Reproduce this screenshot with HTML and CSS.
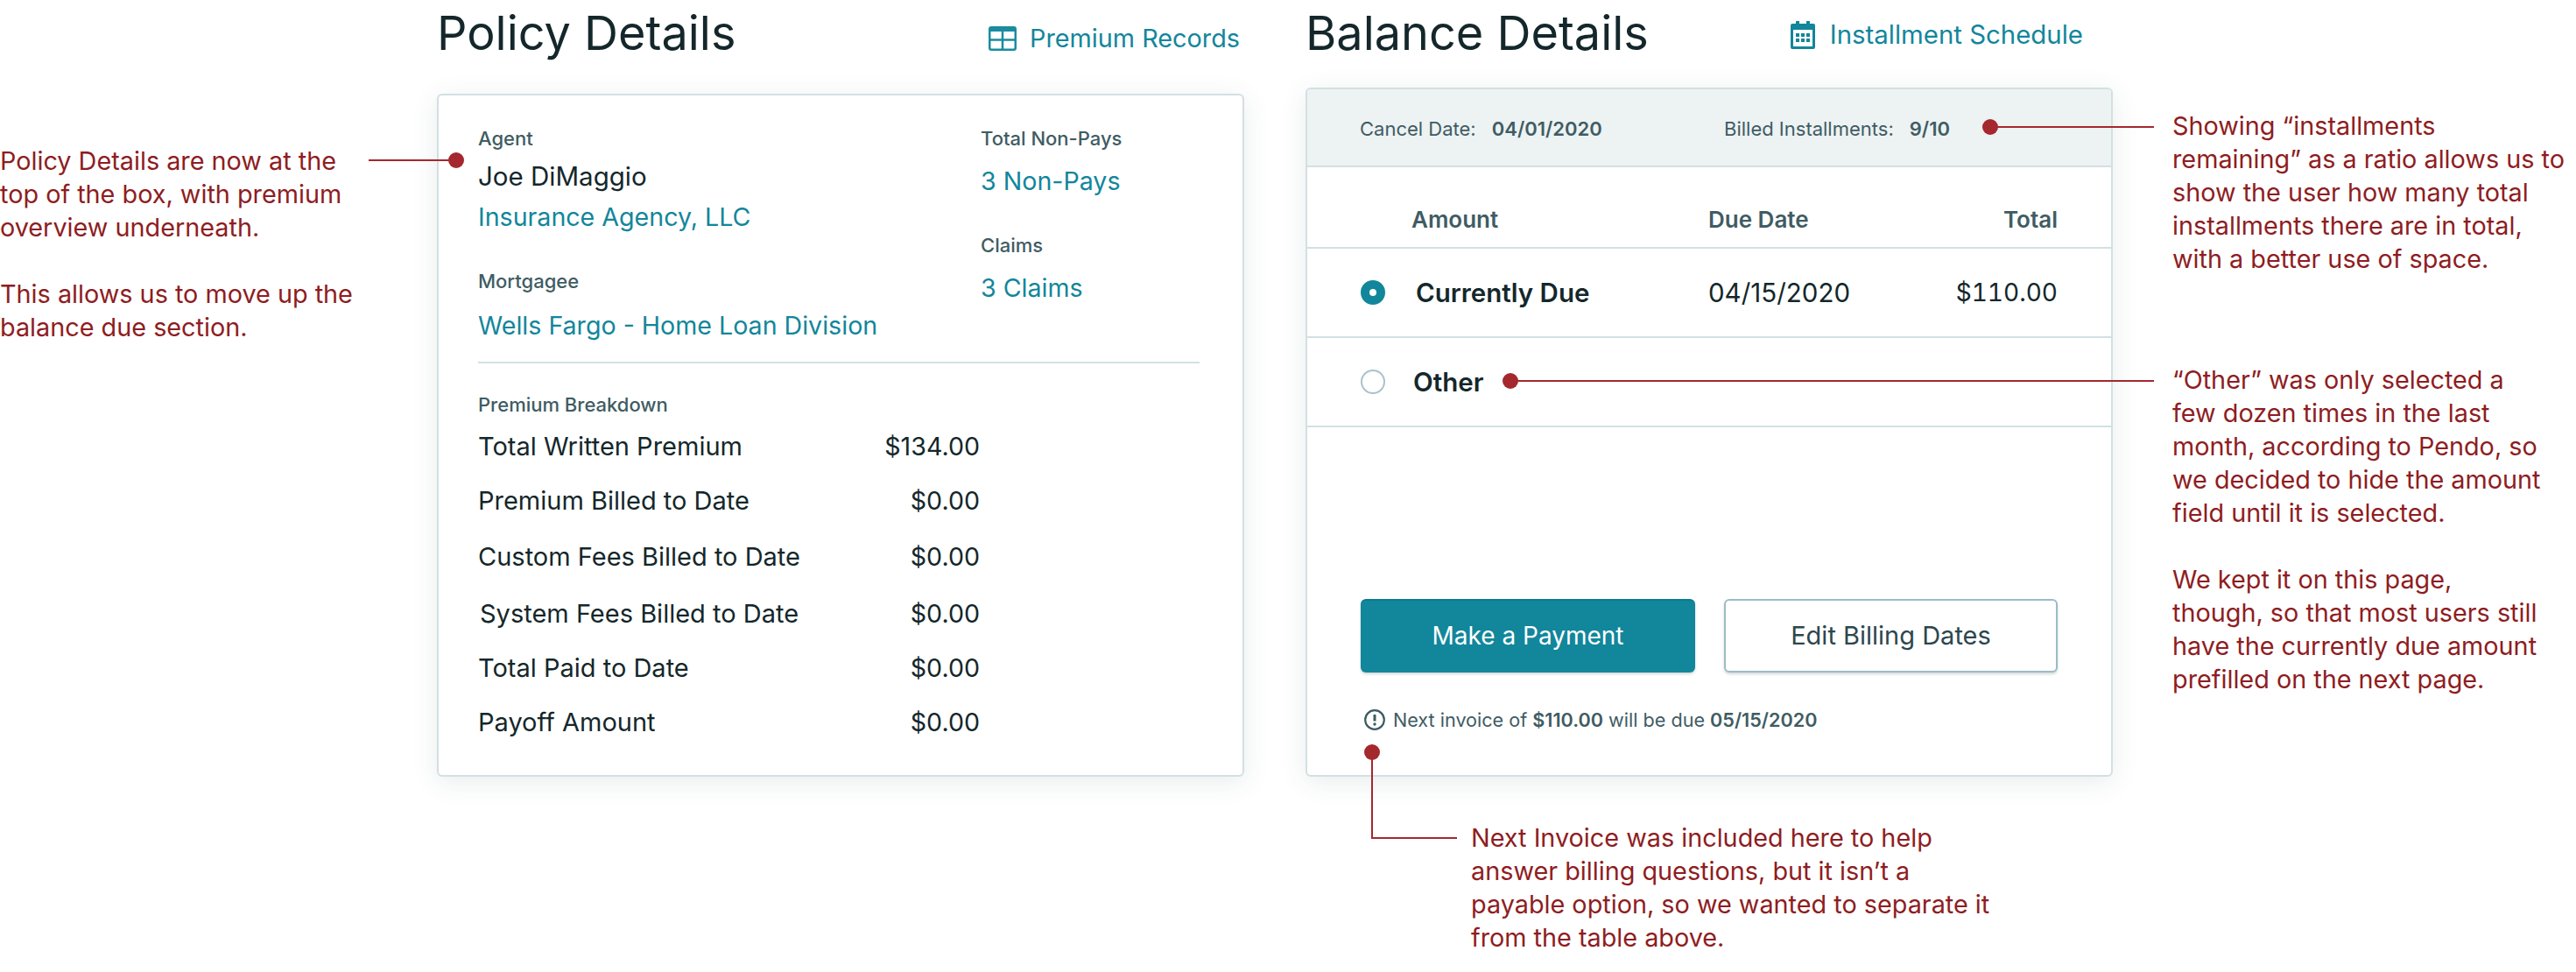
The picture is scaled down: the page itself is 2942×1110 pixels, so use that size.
FILE: index.html
```html
<!DOCTYPE html>
<html lang="en">
<head>
    <meta charset="UTF-8">
    <title>Policy and Balance Details</title>
    <link rel="stylesheet" href="styles.css">
</head>
<body>
    <main class="page">
        <section class="column policy">
            <div class="column-head">
                <h1>Policy Details</h1>
                <a class="head-link" href="#">
                    <svg class="icon-table" viewBox="0 0 32 28"><rect x="1.25" y="1.25" width="29.5" height="25.5" rx="2" fill="#fff" stroke="#1b8ba0" stroke-width="2.5"/><path d="M1 3.5h30" stroke="#1b8ba0" stroke-width="5"/><path d="M1 15.5h30M16 5v22" stroke="#1b8ba0" stroke-width="2.5"/></svg>
                    Premium Records
                </a>
            </div>
            <div class="card policy-card">
                <div class="policy-top">
                    <div class="policy-main">
                        <div class="label">Agent</div>
                        <div class="value agent-name">Joe DiMaggio</div>
                        <a class="value link agent-link" href="#">Insurance Agency, LLC</a>
                        <div class="label mortgagee-label">Mortgagee</div>
                        <a class="value link mortgagee-link" href="#">Wells Fargo - Home Loan Division</a>
                    </div>
                    <div class="policy-side">
                        <div class="label">Total Non-Pays</div>
                        <a class="value link side-link" href="#">3 Non-Pays</a>
                        <div class="label claims-label">Claims</div>
                        <a class="value link side-link" href="#">3 Claims</a>
                    </div>
                </div>
                <hr class="divider">
                <div class="label">Premium Breakdown</div>
                <div class="breakdown">
                    <div class="breakdown-row"><span>Total Written Premium</span><span class="amount">$134.00</span></div>
                    <div class="breakdown-row"><span>Premium Billed to Date</span><span class="amount">$0.00</span></div>
                    <div class="breakdown-row tall"><span>Custom Fees Billed to Date</span><span class="amount">$0.00</span></div>
                    <div class="breakdown-row"><span class="nudged">System Fees Billed to Date</span><span class="amount">$0.00</span></div>
                    <div class="breakdown-row"><span>Total Paid to Date</span><span class="amount">$0.00</span></div>
                    <div class="breakdown-row"><span>Payoff Amount</span><span class="amount">$0.00</span></div>
                </div>
            </div>
        </section>

        <section class="column balance">
            <div class="column-head">
                <h1>Balance Details</h1>
                <a class="head-link" href="#">
                    <svg class="icon-calendar" viewBox="0 0 28 32"><path fill="#12869b" d="M6 0h4v3h8V0h4v3h4a2 2 0 0 1 2 2v25a2 2 0 0 1-2 2H2a2 2 0 0 1-2-2V5a2 2 0 0 1 2-2h4z"/><rect x="3" y="10" width="22" height="19" fill="#fff"/><path fill="#12869b" d="M6 14h4v4H6zM12 14h4v4h-4zM18 14h4v4h-4zM6 20h4v4H6zM12 20h4v4h-4zM18 20h4v4h-4z"/></svg>
                    Installment Schedule
                </a>
            </div>
            <div class="card balance-card">
                <div class="balance-band">
                    <div><span class="band-label">Cancel Date:</span><b>04/01/2020</b></div>
                    <div><span class="band-label">Billed Installments:</span><b>9/10</b></div>
                </div>
                <div class="due-row due-head">
                    <span>Amount</span><span>Due Date</span><span class="total">Total</span>
                </div>
                <div class="due-row due-option">
                    <span class="option-name"><i class="radio checked"></i>Currently Due</span><span>04/15/2020</span><span class="total due-total">$110.00</span>
                </div>
                <div class="due-row due-option">
                    <span class="option-name other"><i class="radio"></i>Other</span>
                </div>
                <div class="actions">
                    <button class="btn btn-primary">Make a Payment</button>
                    <button class="btn btn-secondary">Edit Billing Dates</button>
                </div>
                <p class="next-invoice">
                    <svg class="icon-alert" viewBox="0 0 24 24"><circle cx="12" cy="12" r="10.8" fill="none" stroke="#3d5b62" stroke-width="2.2"/><path d="M12 6v7.5" stroke="#3d5b62" stroke-width="3"/><circle cx="12" cy="17" r="1.7" fill="#3d5b62"/></svg>
                    <span>Next invoice of <b>$110.00</b> will be due <b>05/15/2020</b></span>
                </p>
            </div>
        </section>
    </main>

    <!-- review notes laid over the mockup -->
    <div class="note note-policy">
        <p>Policy Details are now at the<br>top of the box, with premium<br>overview underneath.</p>
        <p>This allows us to move up the<br>balance due section.</p>
    </div>
    <div class="note note-ratio">
        <p>Showing “installments<br>remaining” as a ratio allows us to<br>show the user how many total<br>installments there are in total,<br>with a better use of space.</p>
    </div>
    <div class="note note-other">
        <p>“Other” was only selected a<br>few dozen times in the last<br>month, according to Pendo, so<br>we decided to hide the amount<br>field until it is selected.</p>
        <p>We kept it on this page,<br>though, so that most users still<br>have the currently due amount<br>prefilled on the next page.</p>
    </div>
    <div class="note note-invoice">
        <p>Next Invoice was included here to help<br>answer billing questions, but it isn’t a<br>payable option, so we wanted to separate it<br>from the table above.</p>
    </div>

    <div class="leader leader-policy"></div>
    <div class="dot dot-policy"></div>
    <div class="leader leader-ratio"></div>
    <div class="dot dot-ratio"></div>
    <div class="leader leader-other"></div>
    <div class="dot dot-other"></div>
    <div class="leader-elbow"></div>
    <div class="dot dot-invoice"></div>
</body>
</html>
```

FILE: styles.css
```css
body {
    margin: 0;
    height: 1110px;
    position: relative;
    overflow: hidden;
    background: #fff;
    font-family: Inter, "Noto Sans", sans-serif;
    color: #14272b;
}
a {
    color: #12869b;
    text-decoration: none;
}
.page {
    display: flex;
    gap: 70px;
    padding-left: 499px;
}
.column {
    width: 922px;
}
.column-head {
    display: flex;
    justify-content: space-between;
}
h1 {
    margin: 0;
    font-size: 54px;
    line-height: 76px;
    font-weight: 400;
    color: #14272b;
}
.head-link {
    display: flex;
    align-items: center;
    gap: 15px;
    font-size: 28.8px;
    line-height: 40px;
}
.policy .column-head {
    height: 107px;
    padding-right: 5px;
}
.policy .head-link {
    height: 40px;
    margin-top: 24px;
}
.balance .column-head {
    height: 100px;
    padding-right: 34px;
}
.balance .head-link {
    height: 40px;
    margin-top: 20px;
    gap: 17px;
    font-size: 29.4px;
}
.icon-table {
    width: 32px;
    height: 28px;
}
.icon-calendar {
    width: 28px;
    height: 32px;
}
.card {
    box-sizing: border-box;
    border: 2px solid #d3e0e2;
    border-radius: 6px;
    background: #fff;
    box-shadow: 0 6px 30px rgba(40, 70, 80, 0.1);
}
.policy-card {
    height: 780px;
    padding: 34px 49px 0 45px;
}
.policy-top {
    display: flex;
    justify-content: space-between;
}
.policy-side {
    width: 250px;
}
.label {
    font-size: 22px;
    line-height: 30px;
    font-weight: 500;
    color: #3f5c63;
}
.value {
    display: block;
    font-size: 29.5px;
    line-height: 40px;
}
.link {
    font-size: 28.6px;
}
.agent-name {
    margin-top: 8px;
}
.agent-link {
    margin-top: 7px;
}
.mortgagee-label {
    margin-top: 38px;
}
.mortgagee-link {
    margin-top: 16px;
}
.side-link {
    margin-top: 14px;
}
.claims-label {
    margin-top: 38px;
}
.divider {
    margin: 21px 0 32px;
    border: 0;
    border-top: 2px solid #d3e0e2;
}
.breakdown {
    width: 573px;
    padding-top: 1px;
}
.breakdown-row {
    display: flex;
    justify-content: space-between;
    align-items: center;
    height: 62px;
    font-size: 29px;
}
.breakdown-row.tall {
    height: 67px;
}
.amount {
    font-size: 28.6px;
}
.nudged {
    margin-left: 2px;
}
.balance-card {
    height: 787px;
}
.balance-band {
    box-sizing: border-box;
    display: grid;
    grid-template-columns: 416px auto;
    align-items: center;
    height: 89px;
    padding: 2px 0 0 60px;
    background: #edf2f3;
    border-bottom: 2px solid #d3e0e2;
    border-radius: 4px 4px 0 0;
    font-size: 22px;
    color: #3f5c63;
}
.band-label {
    margin-right: 18px;
}
.balance-band b {
    font-weight: 600;
}
.due-row {
    display: grid;
    grid-template-columns: 338px 1fr auto;
    align-items: center;
    padding-right: 61px;
    border-bottom: 2px solid #d3e0e2;
}
.due-head {
    box-sizing: border-box;
    height: 93px;
    padding-top: 28px;
    padding-left: 119px;
    grid-template-columns: 339px 1fr auto;
    font-size: 26px;
    font-weight: 600;
    color: #3f5c63;
}
.due-option {
    grid-template-columns: 397px 1fr auto;
    height: 100px;
    padding-left: 61px;
    font-size: 29.5px;
}
.option-name {
    display: flex;
    align-items: center;
    gap: 35px;
    font-weight: 600;
}
.option-name.other {
    gap: 32px;
}
.radio {
    box-sizing: border-box;
    width: 28px;
    height: 28px;
    border: 2px solid #a9c4ca;
    border-radius: 50%;
}
.radio.checked {
    border: 10px solid #12869b;
}
.total {
    text-align: right;
}
.due-total {
    font-size: 28px;
    font-feature-settings: "tnum";
}
.actions {
    display: flex;
    gap: 33px;
    margin-top: 196px;
    padding: 0 61px;
}
.btn {
    box-sizing: border-box;
    width: 382px;
    height: 84px;
    padding-bottom: 3px;
    border-radius: 6px;
    font-family: inherit;
    font-size: 28px;
    cursor: pointer;
}
.btn-primary {
    border: none;
    border-top: 2px solid #0b7b8f;
    background: #12869b;
    color: #fff;
    box-shadow: 0 2px 3px rgba(40, 70, 80, 0.2);
}
.btn-secondary {
    width: 381px;
    border: 2px solid #9cbcc4;
    background: #fff;
    color: #2c474e;
    font-size: 29px;
    box-shadow: 0 2px 3px rgba(40, 70, 80, 0.2);
}
.next-invoice {
    display: flex;
    align-items: center;
    gap: 9px;
    margin: 39px 0 0 65px;
    font-size: 21.6px;
    line-height: 30px;
    color: #3f5c63;
}
.next-invoice b {
    font-weight: 600;
}
.icon-alert {
    width: 24px;
    height: 24px;
}
.note {
    position: absolute;
    font-size: 28.8px;
    line-height: 38px;
    color: #8e1d22;
    white-space: nowrap;
}
.note p {
    margin: 0 0 38px;
}
.note-policy {
    left: 0;
    top: 165px;
}
.note-ratio {
    left: 2481px;
    top: 125px;
}
.note-other {
    left: 2481px;
    top: 415px;
}
.note-invoice {
    left: 1680px;
    top: 938px;
}
.dot {
    position: absolute;
    width: 18px;
    height: 18px;
    border-radius: 50%;
    background: #a4282d;
}
.leader {
    position: absolute;
    height: 2px;
    background: #a4282d;
}
.dot-policy {
    left: 512px;
    top: 174px;
}
.leader-policy {
    left: 421px;
    top: 182px;
    width: 100px;
}
.dot-ratio {
    left: 2264px;
    top: 136px;
}
.leader-ratio {
    left: 2273px;
    top: 144px;
    width: 187px;
}
.dot-other {
    left: 1716px;
    top: 426px;
}
.leader-other {
    left: 1725px;
    top: 434px;
    width: 735px;
}
.dot-invoice {
    left: 1558px;
    top: 850px;
}
.leader-elbow {
    position: absolute;
    left: 1566px;
    top: 859px;
    width: 96px;
    height: 97px;
    border-left: 2px solid #a4282d;
    border-bottom: 2px solid #a4282d;
}
```
